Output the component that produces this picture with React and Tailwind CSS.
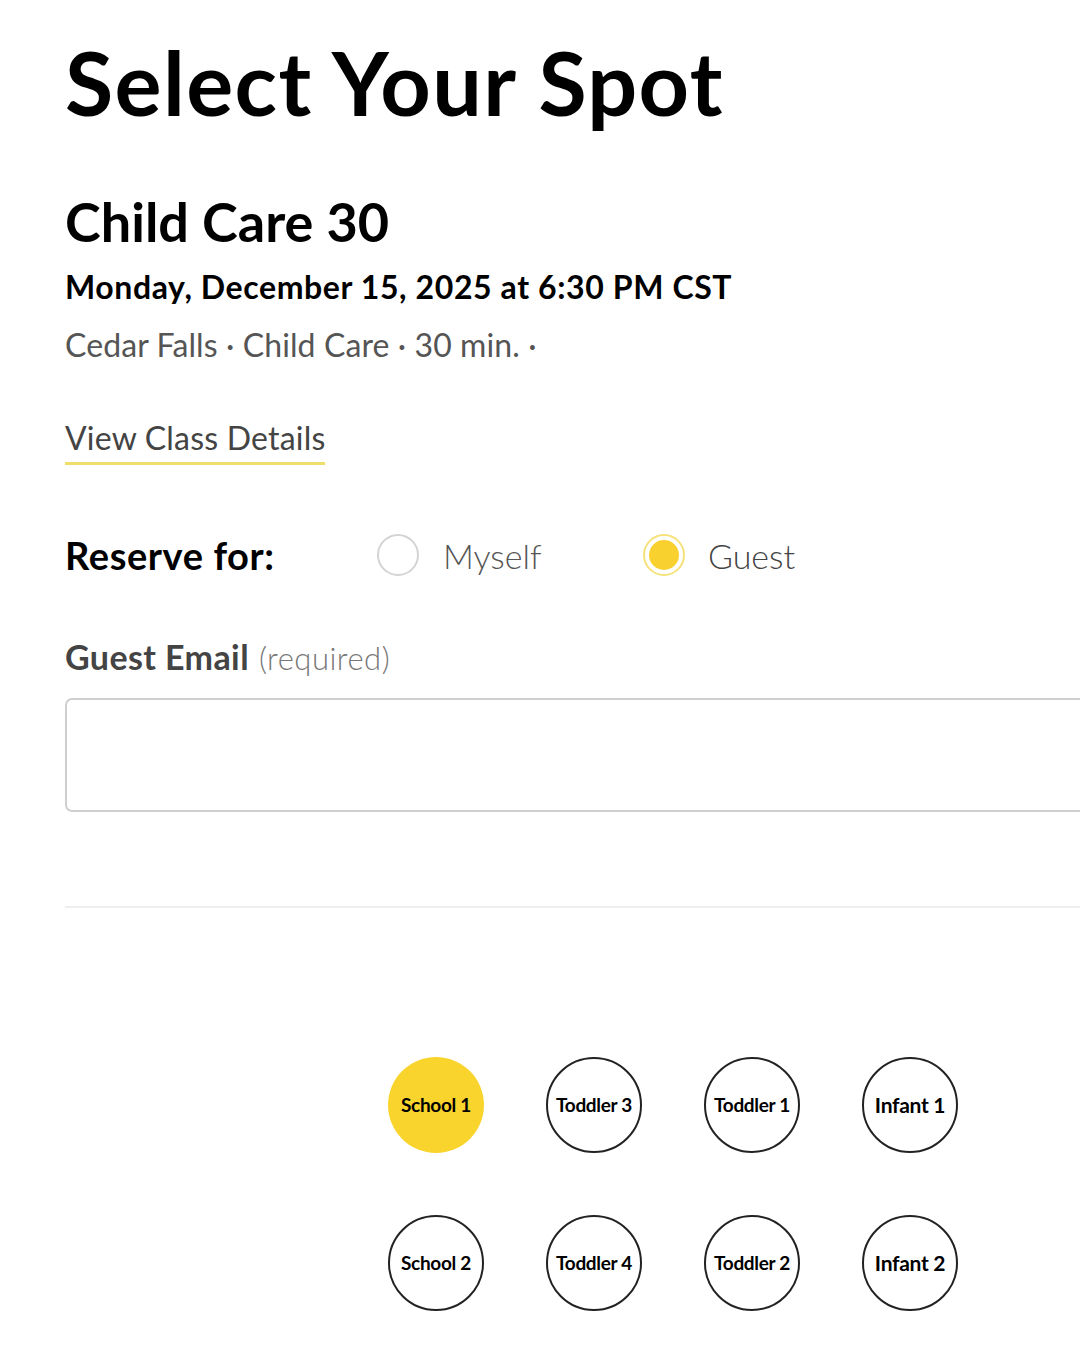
import React from "react";

const spots = [
  { label: "School 1", selected: true },
  { label: "Toddler 3" },
  { label: "Toddler 1" },
  { label: "Infant 1", big: true },
  { label: "School 2" },
  { label: "Toddler 4" },
  { label: "Toddler 2" },
  { label: "Infant 2", big: true },
];

export default function App() {
  return (
    <div className="w-[1080px] h-[1350px] overflow-hidden bg-white font-['Lato',sans-serif]">
      <div className="pl-[65px] pt-[37px]">
        <h1 className="text-[88px] leading-[90px] font-bold text-black tracking-[1.4px]">Select Your Spot</h1>
        <h2 className="mt-[65px] text-[54px] leading-[60px] font-bold text-black">Child Care 30</h2>
        <p className="mt-[15px] text-[32px] leading-[40px] font-bold text-black tracking-[0.6px]">Monday, December 15, 2025 at 6:30 PM CST</p>
        <p className="mt-[18px] text-[32px] leading-[40px] text-[#555] tracking-[0.1px]">Cedar Falls · Child Care · 30 min. ·</p>
        <div className="mt-[53px]">
          <span className="inline-block text-[32px] leading-[40px] text-[#444] border-b-[3px] border-[#f0de6a] pb-[4px] tracking-[0.2px]">View Class Details</span>
        </div>
        <div className="mt-[65px] flex items-center h-[50px]">
          <span className="w-[312px] text-[38px] font-bold text-black tracking-[0.6px]">Reserve for:</span>
          <span className="w-[42px] h-[42px] rounded-full border-2 border-[#d4d4d4]"></span>
          <span className="ml-[24px] w-[200px] text-[34px] font-light text-[#555]">Myself</span>
          <span className="w-[42px] h-[42px] rounded-full border-[2px] border-[#f5e27a] flex items-center justify-center">
            <span className="w-[30px] h-[30px] rounded-full bg-[#f8d12f]"></span>
          </span>
          <span className="ml-[23px] text-[34px] font-light text-[#444]">Guest</span>
        </div>
        <div className="mt-[51px] flex items-baseline gap-[10px]">
          <span className="text-[34px] font-bold text-[#444] tracking-[0.4px]">Guest Email</span>
          <span className="text-[31px] font-light text-[#777] tracking-[0.5px]">(required)</span>
        </div>
        <div className="mt-[16px] w-[1100px] h-[114px] rounded-[7px] border-2 border-[#cfcfcf]"></div>
        <div className="mt-[94px] h-[2px] bg-[#eeeeee]"></div>
        <div className="mt-[149px] ml-[323px] grid grid-cols-[repeat(4,96px)] gap-x-[62px] gap-y-[62px]">
          {spots.map((s) => (
            <div
              key={s.label}
              className={
                s.selected
                  ? "w-[96px] h-[96px] rounded-full bg-[#f8d42c] flex items-center justify-center"
                  : "w-[96px] h-[96px] rounded-full border-2 border-[#222] flex items-center justify-center"
              }
            >
              <span className={s.big ? "text-[21px] font-bold text-black tracking-[-0.3px]" : "text-[19px] font-bold text-black tracking-[-0.3px]"}>{s.label}</span>
            </div>
          ))}
        </div>
      </div>
    </div>
  );
}
